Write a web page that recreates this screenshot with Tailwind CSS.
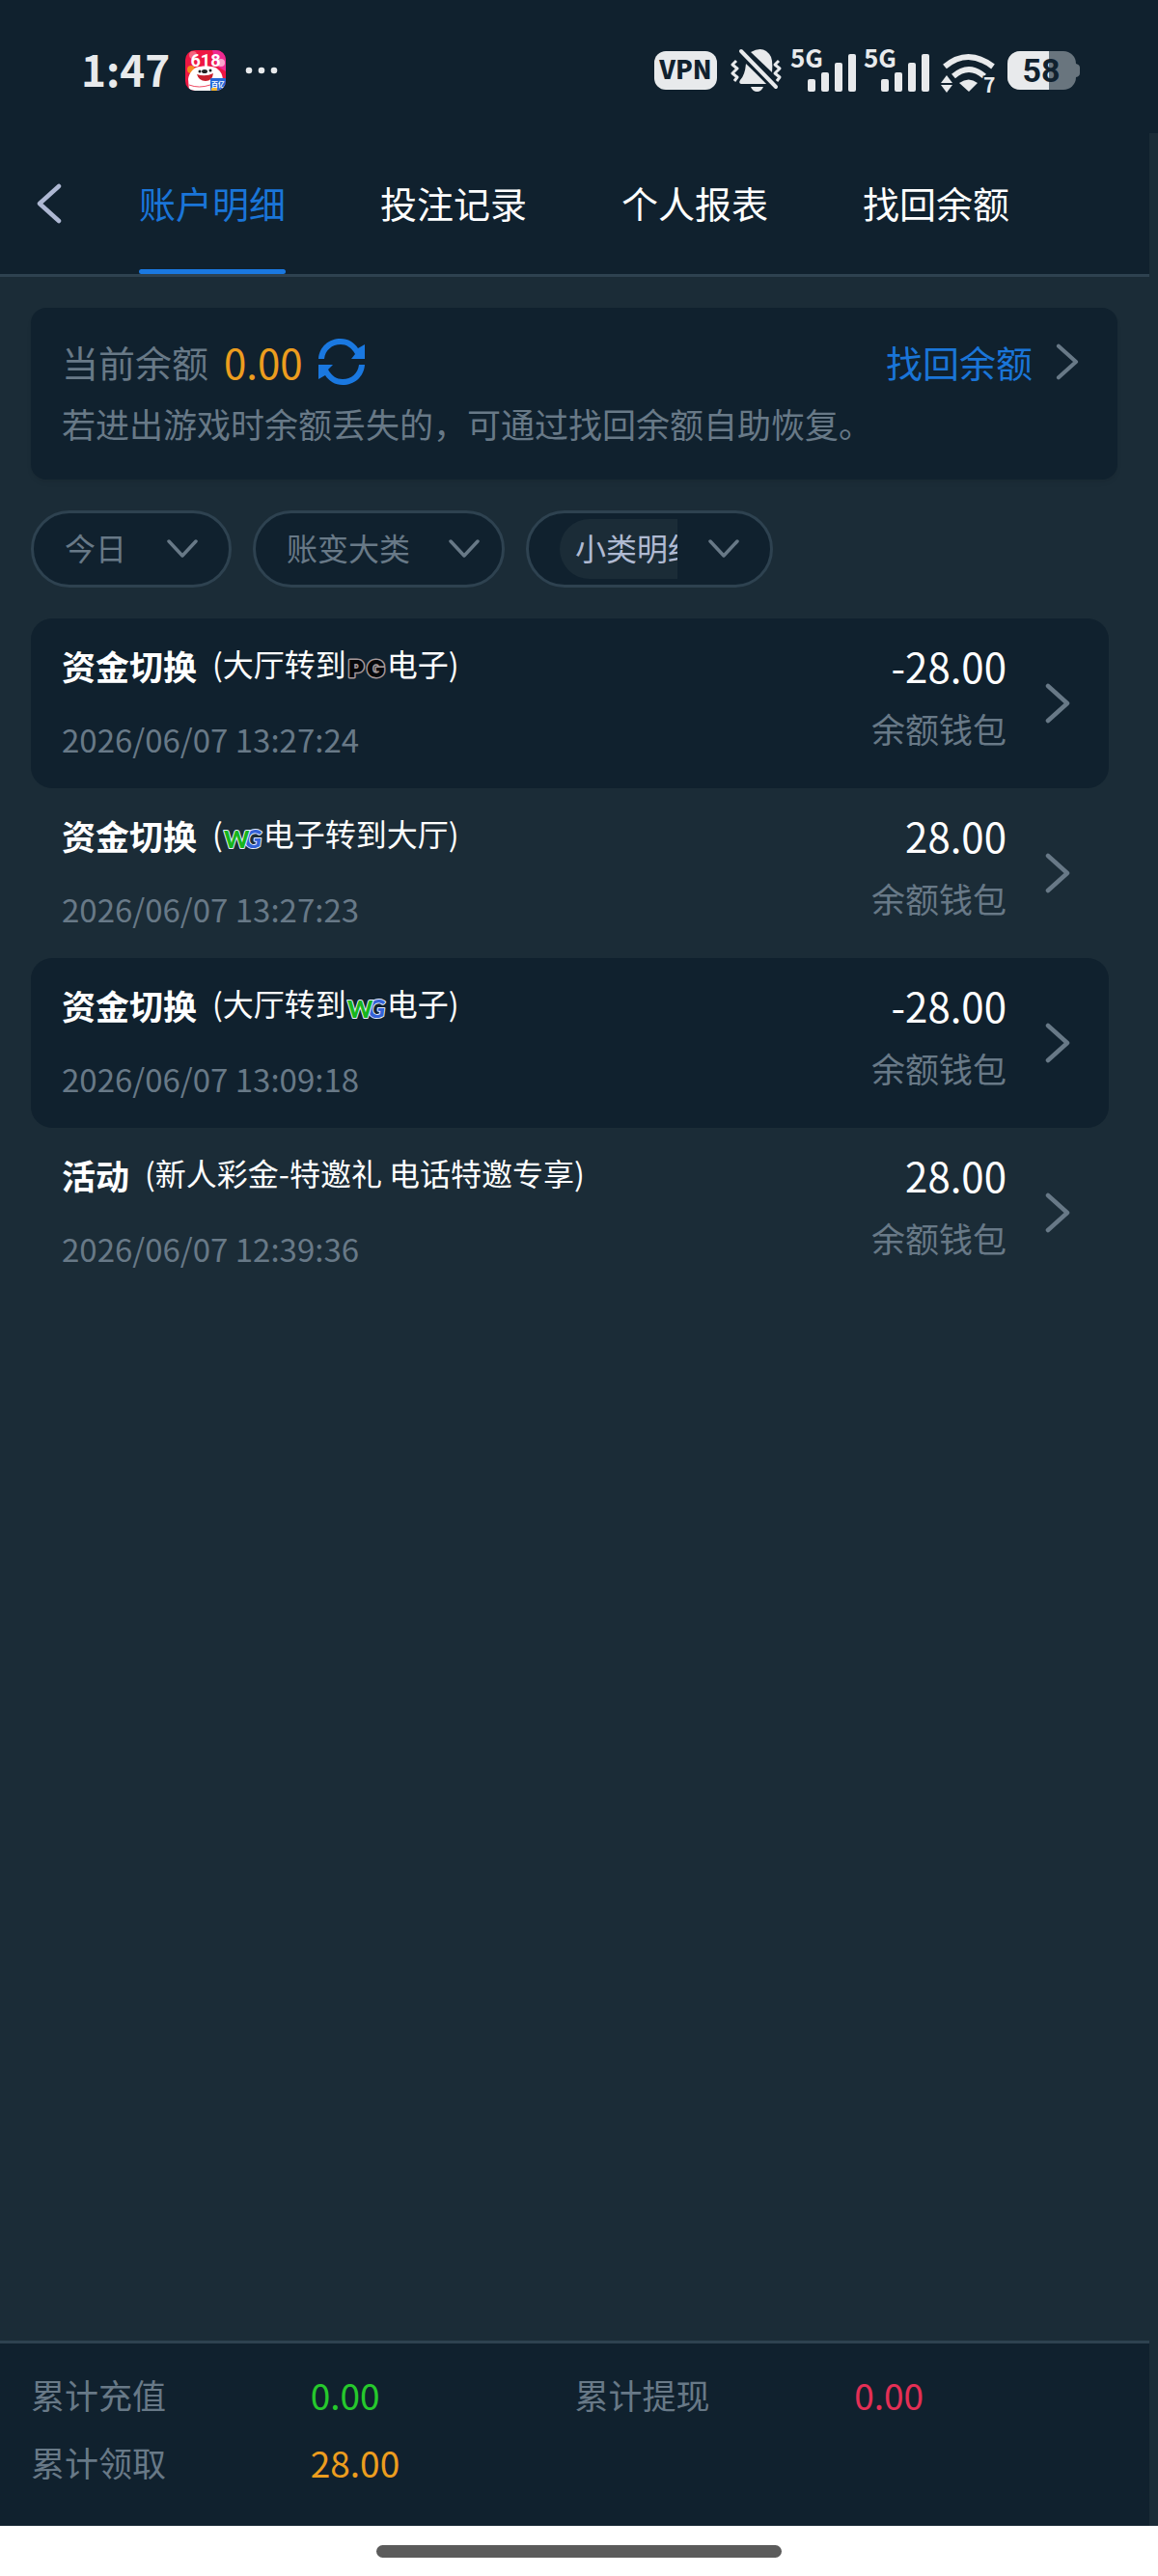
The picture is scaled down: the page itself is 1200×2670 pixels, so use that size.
<!DOCTYPE html>
<html lang="zh-CN">
  <head>
    <meta charset="UTF-8" />
    <meta name="viewport" content="width=device-width, initial-scale=1.0" />
    <title>账户明细</title>
    <script src="https://cdn.jsdelivr.net/npm/@tailwindcss/browser@4"></script>
  </head>

  <body
    class="flex flex-col min-h-screen bg-[#1b2c37] text-[#687987] font-['Noto_Sans_CJK_SC',sans-serif]">
    <!-- Shared icons -->
    <svg class="hidden">
      <symbol id="right" viewBox="0 0 26 42">
        <path d="M3 3 L23 21 L3 39" fill="none" stroke="currentColor" stroke-width="4.500" stroke-linecap="round" stroke-linejoin="round" />
      </symbol>
      <symbol id="down" viewBox="0 0 32 20">
        <path d="M2 2 L16 17 L30 2" fill="none" stroke="currentColor" stroke-width="3.500" stroke-linecap="round" stroke-linejoin="round" />
      </symbol>
      <symbol id="signal" viewBox="0 0 68 48" overflow="visible">
        <text x="-1" y="21" font-size="26" font-weight="700" fill="currentColor">5G</text>
        <g fill="currentColor">
          <rect x="17" y="33" width="8" height="13" rx="2" />
          <rect x="31" y="26" width="8" height="20" rx="2" />
          <rect x="45" y="16" width="8" height="30" rx="2" />
          <rect x="59" y="7" width="8" height="39" rx="2" />
        </g>
      </symbol>
      <symbol id="wg" viewBox="0 0 42 26" overflow="visible">
        <g font-weight="900" paint-order="stroke" stroke="#e6efff" stroke-width="2" stroke-linejoin="round">
          <text x="22" y="25" fill="#3462d6" font-family="Lato, sans-serif" font-size="27" font-style="italic">G</text>
          <text x="1" y="25" fill="#17b51c" font-family="Lato, sans-serif" font-size="25">W</text>
        </g>
      </symbol>
      <symbol id="pg" viewBox="0 0 42 26" overflow="visible">
        <g font-family="Inter, sans-serif" font-size="25" font-weight="900" paint-order="stroke" stroke="#a79a9b" stroke-width="3" stroke-linejoin="round" fill="#06080b">
          <text x="2" y="24">P</text>
          <text x="21" y="24">G</text>
        </g>
      </symbol>
    </svg>

    <!-- Status bar -->
    <div
      class="flex items-center justify-between h-[138px] pl-[84px] pr-[81px] pt-2 bg-[#10212e] text-[#e8eaec]">
      <div class="flex items-center">
        <span class="text-[44px] font-bold leading-[48px] pb-1">1:47</span>
        <svg class="w-[42px] h-[42px] ml-4" viewBox="0 0 42 42">
          <clipPath id="app"><rect width="42" height="42" rx="10" /></clipPath>
          <g clip-path="url(#app)">
            <rect width="42" height="42" fill="#ee1743" />
            <path d="M28 0h14v22l-10-6z" fill="#ef2a92" />
            <circle cx="6" cy="20" r="4" fill="#f58a1f" />
            <circle cx="37" cy="13" r="4" fill="#f9a5cc" />
            <circle cx="8" cy="5" r="4" fill="#f7637c" />
            <path d="M3 30c1-7 5-10 8-12 6-2 14-2 20 0 4 2 8 6 8 14v10H4z" fill="#fff" />
            <circle cx="15" cy="22" r="1.500" fill="#222" />
            <circle cx="26" cy="21" r="1.500" fill="#222" />
            <ellipse cx="20" cy="22" rx="3" ry="2" fill="#222" />
            <path d="M12 25q9 3 17-1q-1 8-8 8t-9-7z" fill="#c81f2c" />
            <path d="M4 36q10 4 22 0" fill="none" stroke="#ee4a63" />
            <rect x="26" y="29" width="16" height="13" rx="1" fill="#2467d8" />
            <rect x="27" y="39" width="6" height="3" fill="#f7b52b" />
            <text x="27" y="38" font-size="7" font-weight="700" fill="#fff">百亿</text>
          </g>
          <text x="21" y="17" text-anchor="middle" font-family="Roboto, sans-serif" font-size="18" font-weight="700" fill="#fff">618</text>
        </svg>
        <svg class="w-[34px] h-2 ml-5" viewBox="0 0 34 8" fill="currentColor">
          <circle cx="4" cy="4" r="3.300" />
          <circle cx="17" cy="4" r="3.300" />
          <circle cx="30" cy="4" r="3.300" />
        </svg>
      </div>

      <div class="flex items-center gap-2">
        <span
          class="flex items-center justify-center w-[65px] h-10 rounded-xl bg-[#e8eaec] text-[#10212e] text-[26px] leading-8 font-black pb-1"
          >VPN</span
        >
        <svg class="w-[61px] h-12" viewBox="0 0 61 48" fill="currentColor">
          <path d="M27 5q14-8 21 5q2 5 1 16z" />
          <path d="M22 17L44 38H17q-3-1-1-4q5-5 6-17z" />
          <path d="M27 41h13q-2 5-6.500 5t-6.500-5z" />
          <path d="M17 4L53 41" stroke="#10212e" stroke-width="10" />
          <path d="M17 4L53 41" stroke="currentColor" stroke-width="4" stroke-linecap="round" />
          <g fill="none" stroke="currentColor" stroke-width="3" stroke-linejoin="round">
            <path d="M12 14l-4 4 5 4-5 5 5 4-3 4" />
            <path d="M56 14l-4 4 5 4-5 5 5 4-3 4" />
          </g>
        </svg>
        <svg class="w-[68px] h-12 overflow-visible"><use href="#signal" /></svg>
        <svg class="w-[68px] h-12 overflow-visible"><use href="#signal" /></svg>
        <svg class="w-16 h-12 overflow-visible" viewBox="0 0 64 48" fill="currentColor">
          <g fill="none" stroke="currentColor" stroke-width="6">
            <path d="M7 20q24-20 50 0" />
            <path d="M16 30q16-14 32 0" />
          </g>
          <path d="M32 46l-10-9q10-7 19 0z" />
          <path d="M9 29l6 8H3zM3 39h12l-6 8z" />
          <text x="47" y="47" font-size="21" font-weight="700" stroke="#10212e" stroke-width="3" paint-order="stroke">7</text>
        </svg>
        <svg class="w-[75px] h-[42px] overflow-visible" viewBox="0 0 75 42">
          <clipPath id="level"><rect width="43" height="42" /></clipPath>
          <rect y="1" width="71" height="40" rx="13" fill="#69757e" />
          <path d="M71 14q4 1 4 4v6q0 3-4 4z" fill="#69757e" />
          <rect y="1" width="71" height="40" rx="13" fill="#e8eaec" clip-path="url(#level)" />
          <text x="35" y="33" text-anchor="middle" font-family="Roboto, sans-serif" font-size="34" font-weight="700" fill="#10212e">58</text>
        </svg>
      </div>
    </div>

    <div class="flex flex-col flex-1 mr-[9px]">
      <!-- Tabs -->
      <header
        class="flex items-stretch h-[149px] pl-[38px] bg-[#10212e] border-b-3 border-[#2e4250] text-[38px] text-white">
        <button class="w-[26px] mr-20 text-[#aeb8d3]" aria-label="返回">
          <svg class="w-[26px] h-[42px] rotate-180"><use href="#right" /></svg>
        </button>
        <nav class="flex gap-[98px]">
          <a href="#" class="relative flex items-center pb-1 text-[#1a75d8]"
            >账户明细<span
              class="absolute inset-x-0 bottom-0 h-[5px] rounded-full bg-[#1a78e0]"></span
          ></a>
          <a href="#" class="flex items-center pb-1">投注记录</a>
          <a href="#" class="flex items-center pb-1">个人报表</a>
          <a href="#" class="flex items-center pb-1">找回余额</a>
        </nav>
      </header>

      <main class="flex-1 py-8 pl-8 pr-[33px]">
        <!-- Balance -->
        <section
          class="rounded-2xl bg-[#10212e] shadow-md shadow-black/5 pl-8 pr-10 pt-9 pb-[38px]">
          <div class="flex items-center gap-4 h-10 text-[38px] leading-10">
            <span>当前余额</span>
            <span class="text-[42px]  text-[#ec9d1e]">0.00</span>
            <button class="text-[#1a78e0]" aria-label="刷新">
              <svg class="w-12 h-12" viewBox="0 0 48 48" fill="currentColor">
                <path d="M0 21C1 8 11 0 23 0c8 0 14 4 18 10l7-4v15H34l4-5C34 9 29 6 23 6 14 6 7 12 6 21z" />
                <path d="M48 27C47 40 37 48 25 48c-8 0-14-4-18-10l-7 4V27h15l-5 5c4 7 9 10 15 10 9 0 16-6 17-15z" />
              </svg>
            </button>
            <a href="#" class="flex items-center gap-6 ml-auto text-[#1a75d8]">
              找回余额
              <svg class="w-6 h-[38px] text-[#687987]"><use href="#right" /></svg>
            </a>
          </div>
          <p class="mt-6 text-[35px] leading-10">
            若进出游戏时余额丢失的，可通过找回余额自助恢复。
          </p>
        </section>

        <!-- Filters -->
        <form class="flex gap-[22px] my-8 text-[32px]">
          <label
            class="flex items-center justify-between w-[208px] h-20 px-8 rounded-full border-3 border-[#2e4250] bg-[#10212e]">
            <select class="appearance-none w-20 pb-1 outline-none" aria-label="日期">
              <option>今日</option>
            </select>
            <svg class="w-8 h-5"><use href="#down" /></svg>
          </label>
          <label
            class="flex items-center justify-between w-[261px] h-20 pl-8 pr-[23px] rounded-full border-3 border-[#2e4250] bg-[#10212e]">
            <select class="appearance-none w-[140px] pb-1 outline-none" aria-label="账变大类">
              <option>账变大类</option>
            </select>
            <svg class="w-8 h-5"><use href="#down" /></svg>
          </label>
          <label
            class="flex items-center justify-between w-[256px] h-20 px-8 rounded-full border-3 border-[#2e4250] bg-[#10212e]">
            <select
              class="appearance-none w-[122px] h-[62px] pl-4 pb-1 rounded-l-[31px] bg-[#1b2c37] text-[#b0bad2] outline-none"
              aria-label="小类明细">
              <option>小类明细</option>
            </select>
            <svg class="w-8 h-5"><use href="#down" /></svg>
          </label>
        </form>

        <!-- Records -->
        <ul class="mr-[9px]">
          <li>
            <a href="#" class="flex h-44 pl-8 pr-10 pt-[29px] rounded-[22px] bg-[#10212e]">
              <div class="flex-1">
                <h3 class="flex gap-4 h-10 text-white">
                  <b class="text-[35px] leading-10">资金切换</b>
                  <span class="flex text-[32px] leading-[34px]">(大厅转到<svg class="w-[42px] h-[26px] mt-2 overflow-visible"><use href="#pg" /></svg>电子)</span>
                </h3>
                <p class="mt-9 text-[33px] leading-10">2026/06/07 13:27:24</p>
              </div>
              <div class="text-right text-[35px] leading-10">
                <p class="text-[42px] leading-10 text-white">-28.00</p>
                <p class="mt-[25px]">余额钱包</p>
              </div>
              <svg class="w-[26px] h-[42px] ml-10 mt-[38px]"><use href="#right" /></svg>
            </a>
          </li>
          <li>
            <a href="#" class="flex h-44 pl-8 pr-10 pt-[29px]">
              <div class="flex-1">
                <h3 class="flex gap-4 h-10 text-white">
                  <b class="text-[35px] leading-10">资金切换</b>
                  <span class="flex text-[32px] leading-[34px]">(<svg class="w-[42px] h-[26px] mt-2 overflow-visible"><use href="#wg" /></svg>电子转到大厅)</span>
                </h3>
                <p class="mt-9 text-[33px] leading-10">2026/06/07 13:27:23</p>
              </div>
              <div class="text-right text-[35px] leading-10">
                <p class="text-[42px] leading-10 text-white">28.00</p>
                <p class="mt-[25px]">余额钱包</p>
              </div>
              <svg class="w-[26px] h-[42px] ml-10 mt-[38px]"><use href="#right" /></svg>
            </a>
          </li>
          <li>
            <a href="#" class="flex h-44 pl-8 pr-10 pt-[29px] rounded-[22px] bg-[#10212e]">
              <div class="flex-1">
                <h3 class="flex gap-4 h-10 text-white">
                  <b class="text-[35px] leading-10">资金切换</b>
                  <span class="flex text-[32px] leading-[34px]">(大厅转到<svg class="w-[42px] h-[26px] mt-2 overflow-visible"><use href="#wg" /></svg>电子)</span>
                </h3>
                <p class="mt-9 text-[33px] leading-10">2026/06/07 13:09:18</p>
              </div>
              <div class="text-right text-[35px] leading-10">
                <p class="text-[42px] leading-10 text-white">-28.00</p>
                <p class="mt-[25px]">余额钱包</p>
              </div>
              <svg class="w-[26px] h-[42px] ml-10 mt-[38px]"><use href="#right" /></svg>
            </a>
          </li>
          <li>
            <a href="#" class="flex h-44 pl-8 pr-10 pt-[29px]">
              <div class="flex-1">
                <h3 class="flex gap-4 h-10 text-white">
                  <b class="text-[35px] leading-10">活动</b>
                  <span class="text-[32px] leading-[34px]">(新人彩金-特邀礼 电话特邀专享)</span>
                </h3>
                <p class="mt-9 text-[33px] leading-10">2026/06/07 12:39:36</p>
              </div>
              <div class="text-right text-[35px] leading-10">
                <p class="text-[42px] leading-10 text-white">28.00</p>
                <p class="mt-[25px]">余额钱包</p>
              </div>
              <svg class="w-[26px] h-[42px] ml-10 mt-[38px]"><use href="#right" /></svg>
            </a>
          </li>
        </ul>
      </main>

      <!-- Totals -->
      <footer class="border-t-3 border-[#2e4250] bg-[#10212e] px-8 pt-[33px] pb-[46px]">
        <dl class="grid grid-cols-2 gap-y-[30px] text-[35px] leading-10">
          <div class="flex">
            <dt class="w-1/2">累计充值</dt>
            <dd class="pl-2 text-[37px] text-[#26c92c]">0.00</dd>
          </div>
          <div class="flex">
            <dt class="w-1/2">累计提现</dt>
            <dd class="pl-2 text-[37px] text-[#e32f55]">0.00</dd>
          </div>
          <div class="flex">
            <dt class="w-1/2">累计领取</dt>
            <dd class="pl-2 text-[37px] text-[#ec9d1e]">28.00</dd>
          </div>
        </dl>
      </footer>
    </div>

    <!-- Gesture bar -->
    <div class="flex items-center justify-center h-[52px] bg-white">
      <span class="w-[35%] h-[13px] rounded-full bg-[#5b5b5b]"></span>
    </div>
  </body>
</html>
